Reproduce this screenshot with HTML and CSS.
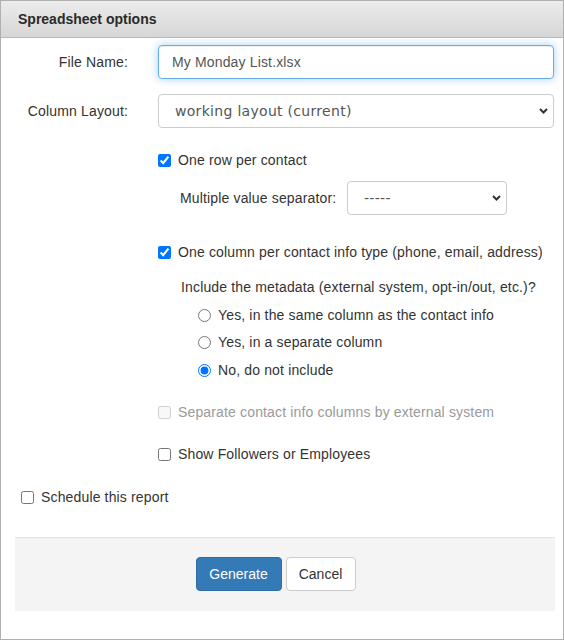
FILE: index.html
```html
<!DOCTYPE html>
<html>
<head>
<meta charset="utf-8">
<link rel="stylesheet" href="styles.css">
</head>
<body>
<div class="dialog">
  <div class="header">Spreadsheet options</div>
  <div class="body">
    <div class="form-row first">
      <label class="row-label">File Name:</label>
      <input class="text-input" type="text" value="My Monday List.xlsx">
    </div>
    <div class="form-row">
      <label class="row-label">Column Layout:</label>
      <div class="select-wrap">
        <div class="select-box">working layout (current)</div>
        <svg class="chev" width="9" height="6" viewBox="0 0 9 6"><path d="M1 1 L4.5 4.5 L8 1" fill="none" stroke="#333" stroke-width="2"/></svg>
      </div>
    </div>

    <div class="options">
      <div class="opt cb1"><input type="checkbox" checked><span>One row per contact</span></div>
      <div class="sep-row">
        <span class="sep-label">Multiple value separator:</span>
        <div class="select-wrap small">
          <div class="select-box">-----</div>
          <svg class="chev" width="9" height="6" viewBox="0 0 9 6"><path d="M1 1 L4.5 4.5 L8 1" fill="none" stroke="#333" stroke-width="2"/></svg>
        </div>
      </div>
      <div class="opt cb2"><input type="checkbox" checked><span>One column per contact info type (phone, email, address)</span></div>
      <div class="include">Include the metadata (external system, opt-in/out, etc.)?</div>
      <div class="radio r1"><input type="radio" name="meta"><span>Yes, in the same column as the contact info</span></div>
      <div class="radio r2"><input type="radio" name="meta"><span>Yes, in a separate column</span></div>
      <div class="radio r3"><input type="radio" name="meta" checked><span>No, do not include</span></div>
      <div class="opt disabled"><input type="checkbox" disabled><span>Separate contact info columns by external system</span></div>
      <div class="opt followers"><input type="checkbox"><span>Show Followers or Employees</span></div>
    </div>

    <div class="opt schedule"><input type="checkbox"><span>Schedule this report</span></div>

    <div class="footer">
      <button class="btn primary">Generate</button>
      <button class="btn">Cancel</button>
    </div>
  </div>
</div>
</body>
</html>
```
FILE: styles.css
```css
html, body {
  margin: 0;
  padding: 0;
  background: #fff;
}
.dialog {
  width: 564px;
  height: 640px;
  box-sizing: border-box;
  border: 1px solid #b0b0b0;
  font-family: "Liberation Sans", Arial, sans-serif;
  font-size: 14px;
  letter-spacing: 0.15px;
  color: #333;
  overflow: hidden;
}
.header {
  height: 36px;
  line-height: 37px;
  padding-left: 17px;
  font-weight: bold;
  letter-spacing: 0;
  color: #2a2a2a;
  background: linear-gradient(#ececec, #d6d6d6);
  border-bottom: 1px solid #b9b9b9;
}
.body {
  padding-top: 7px;
}
.form-row {
  display: grid;
  grid-template-columns: 127px 1fr;
  column-gap: 30px;
  align-items: center;
  padding-right: 9px;
  margin-bottom: 15px;
}
.row-label {
  text-align: right;
}
.text-input {
  height: 34px;
  box-sizing: border-box;
  border: 1px solid #66afe9;
  border-radius: 4px;
  padding: 0 13px;
  font-family: "Liberation Sans", Arial, sans-serif;
  font-size: 14px;
  letter-spacing: 0.15px;
  color: #555;
  outline: none;
  box-shadow: inset 0 1px 1px rgba(0,0,0,.075), 0 0 8px rgba(102,175,233,.6);
  width: 100%;
}
.select-wrap {
  position: relative;
  height: 34px;
}
.select-box {
  height: 34px;
  box-sizing: border-box;
  border: 1px solid #ccc;
  border-radius: 4px;
  padding-left: 16px;
  line-height: 32px;
  font-family: "DejaVu Sans", Verdana, sans-serif;
  font-size: 14px;
  letter-spacing: 0.3px;
  color: #555;
  background: #fff;
}
.chev {
  position: absolute;
  right: 6px;
  top: 14px;
}
.select-wrap.small {
  width: 160px;
}
.options {
  padding-left: 157px;
  padding-top: 7px;
}
.opt, .radio {
  display: flex;
  align-items: center;
  height: 20px;
}
.opt input, .radio input {
  margin: 0 7px 0 0;
  width: 13px;
  height: 13px;
}
.radio {
  padding-left: 40px;
}
.cb2 { margin-top: 27px; }
.sep-row {
  display: flex;
  align-items: center;
  margin-top: 11px;
  padding-left: 22px;
}
.sep-label {
  width: 167px;
}
.include {
  margin-top: 15px;
  padding-left: 23px;
  height: 20px;
  line-height: 20px;
}
.r1 { margin-top: 8px; }
.r2 { margin-top: 7px; }
.r3 { margin-top: 8px; }
.disabled { margin-top: 22px; color: #9a9a9a; }
.followers { margin-top: 22px; }
.schedule {
  margin-top: 23px;
  padding-left: 20px;
}
.footer {
  margin: 30px 0 0 14px;
  width: 540px;
  height: 74px;
  box-sizing: border-box;
  border-top: 1px solid #e3e3e3;
  background: #f4f4f4;
  display: flex;
  justify-content: center;
  align-items: flex-start;
  padding-top: 19px;
  padding-right: 19px;
  gap: 4px;
}
.btn {
  height: 34px;
  box-sizing: border-box;
  border: 1px solid #ccc;
  border-radius: 4px;
  background: #fff;
  color: #333;
  font-family: "Liberation Sans", Arial, sans-serif;
  font-size: 14px;
  padding: 0 12px;
  width: 70px;
}
.btn.primary {
  width: 86px;
  background: #337ab7;
  border-color: #2e6da4;
  color: #fff;
}
```
